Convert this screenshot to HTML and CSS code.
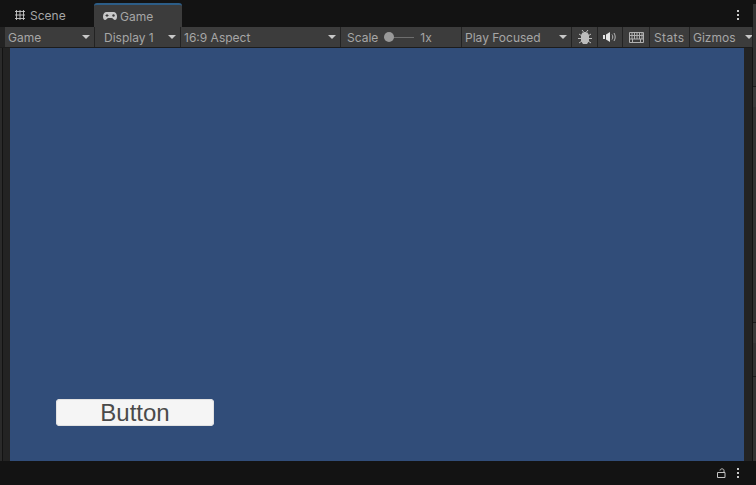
FILE: index.html
```html
<!DOCTYPE html>
<html lang="en">

<head>
    <meta charset="UTF-8">
    <title>Game</title>
    <link rel="stylesheet" href="styles.css">
</head>

<body>
    <div class="top">
        <div class="panel">
            <div class="tabbar">
                <div class="tab">
                    <svg width="10" height="10" viewBox="0 0 10 10">
                        <path d="M1.500 0v10M5 0v10M8.500 0v10M0 1.500h10M0 5h10M0 8.500h10" stroke="#c8c8c8" stroke-width=".9" fill="none" />
                    </svg>
                    <span>Scene</span>
                </div>
                <div class="tab active">
                    <svg width="14" height="8" viewBox="0 0 14 8">
                        <path d="M3.500 0h7C12.500 0 14 2 14 4.500C14 7 13 8 12 8C10.500 8 10 6 8.500 6h-3C4 6 3.500 8 2 8C1 8 0 7 0 4.500C0 2 1.500 0 3.500 0z" fill="#c8c8c8" />
                        <path d="M2.500 3.500h3M4 2v3" stroke="#3c3c3c" stroke-width="1" />
                        <circle cx="10.500" cy="3.500" r="1.200" fill="#3c3c3c" />
                    </svg>
                    <span>Game</span>
                </div>
                <div class="menu-dots"><i></i><i></i><i></i></div>
            </div>

            <div class="toolbar">
                <div class="tool drop w-game">Game</div>
                <div class="tool drop w-display">Display 1</div>
                <div class="tool drop w-aspect">16:9 Aspect</div>
                <div class="tool w-scale">
                    <span>Scale</span>
                    <div class="slider"><b></b></div>
                    <span>1x</span>
                </div>
                <div class="tool drop w-play">Play Focused</div>
                <div class="tool icon w-bug">
                    <svg width="16" height="16" viewBox="0 0 16 16">
                        <path d="M5 1l2 2.500h2L11 1M2 5l3 2M14 5l-3 2M1 9.500h3M15 9.500h-3M2 14l3-2M14 14l-3-2" stroke="#bcbcbc" stroke-width="1" fill="none" />
                        <path d="M5.500 3.500h5L12 6v6l-2 3H6l-2-3V6z" fill="#bcbcbc" />
                    </svg>
                </div>
                <div class="tool icon w-sound">
                    <svg width="14" height="12" viewBox="0 0 14 12">
                        <path d="M0 4h2v4H0zM3 3.500L7 1v10L3 8.500z" fill="#e4e4e4" />
                        <path d="M9 3.500c1 1.500 1 3.500 0 5M11 2c1.600 2.500 1.600 5.500 0 8" stroke="#b4b4b4" stroke-width="1" fill="none" />
                    </svg>
                </div>
                <div class="tool icon w-keys">
                    <svg width="15" height="11" viewBox="0 0 15 11">
                        <path d="M.5.500h14v10H.5zM.5 3.500h14M.5 7h14M3 .500v6.500M5.500.500v6.500M8 .500v6.500M10.500.500v6.500M13 .500v6.500M3.500 7v3.500M11.500 7v3.500" stroke="#b0b0b0" stroke-width="1" fill="none" />
                    </svg>
                </div>
                <div class="tool w-stats">Stats</div>
                <div class="tool w-gizmos">
                    <span>Gizmos</span>
                    <i class="sep"></i>
                    <i class="arrow"></i>
                </div>
            </div>

            <div class="main">
                <div class="gutter"></div>
                <div class="view">
                    <div class="ui-button">Button</div>
                </div>
                <div class="side"></div>
            </div>
        </div>

        <div class="strip">
            <div class="strip-part"></div>
            <div class="strip-part light"></div>
            <div class="strip-part grow"></div>
            <div class="strip-part light"></div>
            <div class="strip-part tall"></div>
            <div class="strip-part end"></div>
        </div>
    </div>

    <div class="status">
        <svg width="9" height="10" viewBox="0 0 9 10">
            <path d="M.5 4.500h7.500v5H.5zM7 4.500V2.500C7 .300 3 .300 3 2.500" stroke="#c4c4c4" stroke-width="1" fill="none" />
        </svg>
        <div class="menu-dots"><i></i><i></i><i></i></div>
    </div>
</body>

</html>
```

FILE: styles.css
```css
* {
    padding: 0;
    margin: 0;
    box-sizing: border-box;
}

body {
    width: 756px;
    height: 485px;
    overflow: hidden;
    display: flex;
    flex-direction: column;
    background: #131313;
    font-family: Inter, "Liberation Sans", sans-serif;
    font-size: 12px;
    color: #a6a6a6;
}

.top {
    height: 461px;
    display: flex;
}

.panel {
    width: 753px;
    display: flex;
    flex-direction: column;
}

.tabbar {
    height: 27px;
    display: flex;
    align-items: flex-end;
    padding-left: 15px;
}

.tab {
    height: 24px;
    display: flex;
    align-items: center;
    gap: 5px;
    width: 79px;
}

.tab.active {
    width: 88px;
    background: #3c3c3c;
    border-top: 2px solid #2c5d87;
    border-radius: 3px 3px 0 0;
    padding-left: 9px;
    gap: 3px;
}

.menu-dots {
    display: flex;
    flex-direction: column;
    gap: 2px;
    margin-left: auto;
}

.menu-dots i {
    width: 2px;
    height: 2px;
    background: #c8c8c8;
}

.tabbar .menu-dots {
    margin-right: 14px;
    margin-bottom: 7px;
}

.toolbar {
    height: 21px;
    display: flex;
    gap: 1px;
    padding-left: 5px;
    background: #232323;
    border-bottom: 1px solid #1c1c1c;
}

.tool {
    height: 20px;
    display: flex;
    align-items: center;
    padding-left: 3px;
    background: #3c3c3c;
    white-space: nowrap;
    position: relative;
    overflow: hidden;
}

.drop::after {
    content: "";
    position: absolute;
    right: 4px;
    top: 8px;
    border-left: 4px solid transparent;
    border-right: 4px solid transparent;
    border-top: 4px solid #c8c8c8;
}

.icon {
    justify-content: center;
    padding-left: 0;
}

.w-game { width: 89px; }
.w-display { width: 85px; padding-left: 9px; }
.w-aspect { width: 159px; }
.w-scale { width: 120px; padding-left: 6px; }
.w-play { width: 109px; }
.w-bug { width: 25px; }
.w-sound { width: 24px; }
.w-keys { width: 26px; }
.w-stats { width: 39px; padding-left: 4px; letter-spacing: .4px; }
.w-gizmos { width: 62px; }

.slider {
    width: 30px;
    height: 1px;
    margin: 0 6px;
    background: #6e6e6e;
    position: relative;
}

.slider b {
    position: absolute;
    left: 0;
    top: -5px;
    width: 10px;
    height: 10px;
    border-radius: 50%;
    background: #999;
}

.sep {
    width: 1px;
    height: 12px;
    margin-left: 5px;
    background: #2a2a2a;
}

.arrow {
    flex: none;
    margin-left: 4px;
    border-left: 4px solid transparent;
    border-right: 4px solid transparent;
    border-top: 4px solid #c8c8c8;
}

.main {
    flex: 1;
    display: flex;
}

.gutter {
    width: 10px;
    background: linear-gradient(to right, #2a2a2a 2px, #131313 2px, #131313 3px, #232323 3px);
}

.view {
    width: 734px;
    background: #314d79;
    display: flex;
    align-items: flex-end;
    padding: 0 0 35px 46px;
}

.ui-button {
    width: 158px;
    height: 27px;
    background: #f5f5f5;
    border-radius: 4px;
    box-shadow: inset 0 0 0 1px #e2e2e2;
    font-family: "Liberation Sans", Arial, sans-serif;
    font-size: 24px;
    line-height: 27px;
    text-align: center;
    color: #4a4a4a;
}

.side {
    width: 8px;
    background: #232323;
}

/* right edge, cut off neighbouring panel */
.strip {
    width: 3px;
    margin-top: 4px;
    display: flex;
    flex-direction: column;
}

.strip-part {
    height: 83px;
    background: #333;
    border-bottom: 1px solid #1a1a1a;
}

.strip-part.light {
    height: 20px;
    background: #3a3a3a;
    border-bottom: 0;
}

.strip-part.grow {
    height: 216px;
}

.strip-part.tall {
    height: 34px;
}

.strip-part.end {
    flex: 1;
    height: auto;
    border-bottom: 0;
}

.status {
    flex: 1;
    display: flex;
    align-items: center;
    justify-content: flex-end;
    gap: 11px;
    padding-right: 17px;
}

.status .menu-dots {
    margin-left: 0;
}
```
